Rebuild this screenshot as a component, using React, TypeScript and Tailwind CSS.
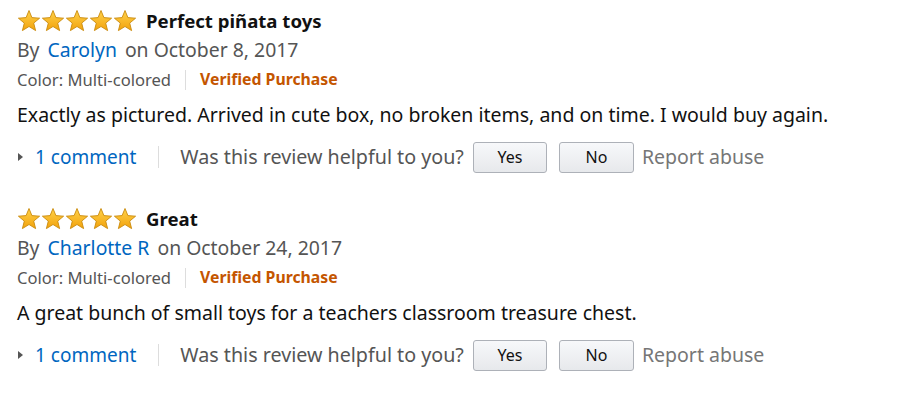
import React from "react";

const Star = () => (
  <svg width="24" height="24" viewBox="0 0 24 24">
    <defs>
      <linearGradient id="sg" x1="0" y1="0" x2="0" y2="1">
        <stop offset="0" stopColor="#ffd24a" />
        <stop offset="1" stopColor="#f2a20c" />
      </linearGradient>
    </defs>
    <path
      d="M12 1.5 L14.9 8.6 L22.6 9.2 L16.7 14.1 L18.6 21.6 L12 17.5 L5.4 21.6 L7.3 14.1 L1.4 9.2 L9.1 8.6 Z"
      fill="url(#sg)"
      stroke="#c98a0c"
      strokeWidth="0.9"
      strokeLinejoin="round"
    />
  </svg>
);

const Review = ({ title, author, date, body }: { title: string; author: string; date: string; body: string }) => (
  <div className="flex flex-col">
    <div className="flex items-center h-[24px]">
      <div className="flex">
        {[0, 1, 2, 3, 4].map((i) => (
          <Star key={i} />
        ))}
      </div>
      <span className="ml-[9px] font-bold text-[18.6px] text-[#111]">{title}</span>
    </div>
    <div className="mt-[3px] h-[28px] flex items-center text-[19.4px] text-[#555]">
      <span>By</span>
      <span className="ml-[8px] text-[#0066c0]">{author}</span>
      <span className="ml-[8px]">on {date}</span>
    </div>
    <div className="mt-[2px] h-[28px] flex items-center text-[16.6px] text-[#555]">
      <span>Color: Multi-colored</span>
      <span className="mx-[14px] w-px h-[20px] bg-[#ddd]" />
      <span className="font-bold text-[#c45500] text-[15.8px]">Verified Purchase</span>
    </div>
    <div className="mt-[7px] h-[28px] flex items-center text-[19.5px] text-[#111]">{body}</div>
    <div className="mt-[11px] h-[34px] flex items-center text-[19px]">
      <svg width="8" height="10" viewBox="0 0 8 10" className="mr-[10px]">
        <path d="M1 1 L6 5 L1 9 Z" fill="#555" />
      </svg>
      <span className="text-[#0066c0]">1 comment</span>
      <span className="ml-[22px] mr-[21px] w-px h-[22px] bg-[#ddd]" />
      <span className="text-[#555] text-[19.7px]">Was this review helpful to you?</span>
      <button className="ml-[9px] w-[74px] h-[31px] rounded-[3px] border border-[#adb1b8] bg-gradient-to-b from-[#f7f8fa] to-[#e7e9ec] text-[16px] text-[#111]">
        Yes
      </button>
      <button className="ml-[12px] w-[75px] h-[31px] rounded-[3px] border border-[#adb1b8] bg-gradient-to-b from-[#f7f8fa] to-[#e7e9ec] text-[16px] text-[#111]">
        No
      </button>
      <span className="ml-[8px] text-[#767676] text-[19.5px]">Report abuse</span>
    </div>
  </div>
);

export default function App() {
  return (
    <div
      className="w-[912px] h-[402px] bg-white pl-[17px] pt-[9px] flex flex-col gap-[33px]"
      style={{ fontFamily: '"Noto Sans", "Open Sans", sans-serif' }}
    >
      <Review
        title="Perfect piñata toys"
        author="Carolyn"
        date="October 8, 2017"
        body="Exactly as pictured. Arrived in cute box, no broken items, and on time. I would buy again."
      />
      <Review
        title="Great"
        author="Charlotte R"
        date="October 24, 2017"
        body="A great bunch of small toys for a teachers classroom treasure chest."
      />
    </div>
  );
}
